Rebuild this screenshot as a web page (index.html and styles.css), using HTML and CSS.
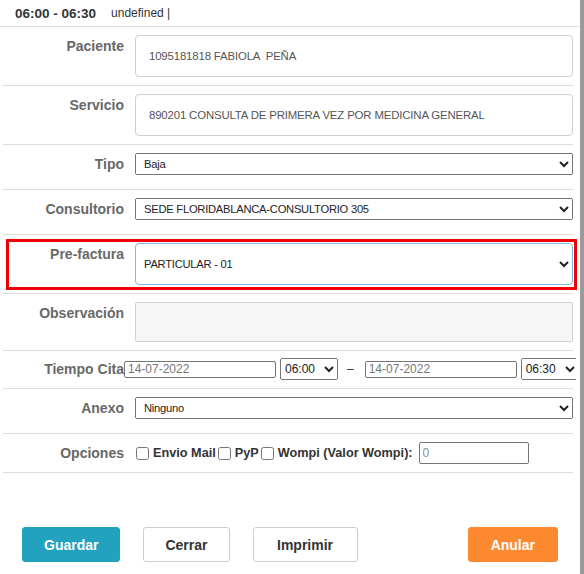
FILE: index.html
```html
<!DOCTYPE html>
<html lang="es">
<head>
<meta charset="utf-8">
<title>Cita</title>
<link rel="stylesheet" href="styles.css">
</head>
<body>
<div class="frame">
  <div class="head"><b class="time">06:00 - 06:30</b><span class="undef">undefined |</span></div>
  <form class="form">
    <div class="row">
      <label class="lbl">Paciente</label>
      <div class="ctl"><input class="field" type="text" value="1095181818 FABIOLA  PEÑA" readonly></div>
    </div>
    <div class="row">
      <label class="lbl">Servicio</label>
      <div class="ctl"><input class="field" type="text" value="890201 CONSULTA DE PRIMERA VEZ POR MEDICINA GENERAL" readonly></div>
    </div>
    <div class="row">
      <label class="lbl">Tipo</label>
      <div class="ctl"><select class="sel"><option>Baja</option></select></div>
    </div>
    <div class="row">
      <label class="lbl">Consultorio</label>
      <div class="ctl"><select class="sel"><option>SEDE FLORIDABLANCA-CONSULTORIO 305</option></select></div>
    </div>
    <div class="row">
      <div class="mark"></div>
      <label class="lbl">Pre-factura</label>
      <div class="ctl"><select class="sel sel-big"><option>PARTICULAR - 01</option></select></div>
    </div>
    <div class="row">
      <label class="lbl">Observación</label>
      <div class="ctl"><textarea class="area" readonly></textarea></div>
    </div>
    <div class="row row-time">
      <label class="lbl lbl-tight">Tiempo Cita</label>
      <div class="ctl ctl-inline ctl-clip">
        <input class="date" type="text" value="14-07-2022" readonly>
        <select class="hour"><option>06:00</option></select>
        <span class="dash">–</span>
        <input class="date" type="text" value="14-07-2022" readonly>
        <select class="hour"><option>06:30</option></select>
      </div>
    </div>
    <div class="row">
      <label class="lbl">Anexo</label>
      <div class="ctl"><select class="sel"><option>Ninguno</option></select></div>
    </div>
    <div class="row row-opts">
      <label class="lbl">Opciones</label>
      <div class="ctl ctl-inline">
        <input class="chk" type="checkbox"><span class="opt">Envio Mail</span>
        <input class="chk" type="checkbox"><span class="opt">PyP</span>
        <input class="chk" type="checkbox"><span class="opt">Wompi (Valor Wompi):</span>
        <input class="wompi" type="text" placeholder="0">
      </div>
    </div>
  </form>
  <div class="actions">
    <button class="btn btn-primary" type="button">Guardar</button>
    <button class="btn btn-default" type="button">Cerrar</button>
    <button class="btn btn-default btn-wide" type="button">Imprimir</button>
    <button class="btn btn-warn" type="button">Anular</button>
  </div>
</div>
</body>
</html>
```
FILE: styles.css
```css
html, body {
  margin: 0;
  padding: 0;
  background: #fff;
}
body {
  font-family: "Liberation Sans", Arial, sans-serif;
  color: #333;
}
.frame {
  width: 580px;
  height: 574px;
  border-right: 4px solid #9a9a9a;
  overflow: hidden;
}
.head {
  height: 27px;
  width: 579px;
  box-sizing: border-box;
  border-bottom: 1px solid #dcdcdc;
  display: flex;
  align-items: center;
  padding-left: 15px;
}
.time {
  font-size: 13.5px;
  font-weight: bold;
  color: #333;
  margin-right: 15px;
}
.undef {
  font-size: 12px;
  color: #333;
}
.form {
  padding: 0 7px 0 3px;
  margin: 0;
}
.row {
  position: relative;
  display: flex;
  padding: 8px 0;
  border-bottom: 1px solid #dcdcdc;
}
.lbl {
  flex: 0 0 121px;
  width: 121px;
  margin-right: 11px;
  text-align: right;
  font-size: 14px;
  font-weight: bold;
  line-height: 22px;
  color: #686868;
  white-space: nowrap;
}
.lbl-tight {
  margin-right: 0;
}
.ctl {
  flex: 1;
  min-height: 28px;
  display: flex;
  align-items: flex-start;
  min-width: 0;
}
.ctl-inline {
  align-items: center;
  min-height: 22px;
}
.ctl-clip {
  margin-right: -3px;
  overflow: hidden;
}
.field {
  width: 100%;
  height: 42px;
  box-sizing: border-box;
  border: 1px solid #cfcfcf;
  border-radius: 4px;
  padding: 0 13px;
  font-family: "Liberation Sans", Arial, sans-serif;
  font-size: 11.4px;
  letter-spacing: -0.15px;
  color: #555;
  background: #fff;
  outline: none;
}
.sel {
  width: 100%;
  height: 22px;
  box-sizing: border-box;
  padding-left: 4px;
  font-family: "Liberation Sans", Arial, sans-serif;
  font-size: 11.2px;
  letter-spacing: -0.25px;
  color: #222;
}
.sel-big {
  height: 42px;
  border: 1px solid #7cb7e6;
  border-radius: 4px;
  background: #fff;
  padding-left: 4px;
}
.area {
  width: 100%;
  height: 40px;
  box-sizing: border-box;
  background: #f6f6f6;
  border: 1px solid #d2d2d2;
  border-radius: 2px;
  resize: none;
  outline: none;
  margin: 0;
}
.row-time {
  padding: 7px 0 8px;
}
.date {
  flex: 0 0 152px;
  width: 152px;
  height: 17px;
  box-sizing: border-box;
  margin: 0 4px 0 0;
  padding: 0 3px;
  border: 1px solid #767676;
  border-radius: 2px;
  font-family: "Liberation Sans", Arial, sans-serif;
  font-size: 12px;
  color: #777;
  outline: none;
}
.hour {
  flex: 0 0 58px;
  width: 58px;
  height: 22px;
  box-sizing: border-box;
  font-family: "Liberation Sans", Arial, sans-serif;
  font-size: 12px;
  color: #222;
}
.dash {
  margin: 0 11px 0 9px;
  font-size: 12px;
  color: #333;
}
.chk {
  width: 13px;
  height: 13px;
  margin: 0 4px 0 1px;
}
.opt {
  font-size: 12.7px;
  font-weight: bold;
  color: #333;
  margin-right: 1px;
  white-space: nowrap;
}
.wompi {
  width: 110px;
  height: 22px;
  box-sizing: border-box;
  margin-left: 5px;
  padding: 0 3px;
  border: 1px solid #767676;
  border-radius: 2px;
  font-family: "Liberation Sans", Arial, sans-serif;
  font-size: 12px;
  outline: none;
}
.wompi::placeholder {
  color: #8a8a8a;
}
.mark {
  position: absolute;
  top: 4px;
  bottom: 3px;
  left: 3px;
  right: -4px;
  border: 3px solid #f00000;
  pointer-events: none;
}
.actions {
  display: flex;
  gap: 23px;
  padding: 0 22px;
  margin-top: 54px;
}
.btn {
  height: 35px;
  padding: 0 21px;
  font-family: "Liberation Sans", Arial, sans-serif;
  font-size: 14px;
  font-weight: bold;
  border-radius: 3px;
  border: 1px solid #cfcfcf;
  cursor: pointer;
}
.btn-primary {
  background: #22a2be;
  border-color: #22a2be;
  color: #fff;
}
.btn-default {
  background: #fff;
  color: #333;
}
.btn-wide {
  padding: 0 23.5px;
}
.btn-warn {
  margin-left: auto;
  background: #fd8a30;
  border-color: #fd8a30;
  color: #fff;
  padding: 0 22px;
}
```
